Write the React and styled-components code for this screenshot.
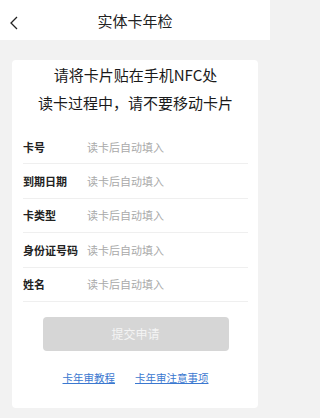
import React from "react";
import styled, { createGlobalStyle } from "styled-components";

const GlobalStyle = createGlobalStyle`
  html, body {
    margin: 0;
    padding: 0;
    background: #f2f2f2;
    font-family: "Noto Sans CJK SC", "Noto Sans", sans-serif;
  }
`;

const Page = styled.div`
  width: 270px;
  min-height: 418px;
  background: #f2f2f2;
`;
const Header = styled.div`
  position: relative;
  height: 40px;
  background: #fff;
  display: flex;
  align-items: center;
  justify-content: center;
  font-size: 15px;
  color: #222;
`;
const Back = styled.div`
  position: absolute;
  left: 8px;
  top: 13px;
  width: 12px;
  height: 14px;
`;
const Body = styled.div`
  padding: 20px 12px 10px;
`;
const Card = styled.div`
  background: #fff;
  border-radius: 4px;
  padding: 1px 10px 23px 11px;
`;
const Tip = styled.div`
  text-align: center;
  font-size: 15px;
  line-height: 28px;
  color: #1a1a1a;
  margin-bottom: 13px;
`;
const Row = styled.div`
  display: flex;
  align-items: center;
  height: 34.4px;
  box-sizing: border-box;
  border-bottom: 1px solid #efefef;
`;
const Label = styled.div`
  width: 64px;
  font-size: 11px;
  font-weight: 700;
  color: #222;
  white-space: nowrap;
`;
const Value = styled.div`
  font-size: 11px;
  color: #a9a9a9;
`;
const Submit = styled.button`
  display: block;
  width: 186px;
  height: 34px;
  margin: 15px auto 0;
  border: none;
  border-radius: 4px;
  background: #d6d6d6;
  color: #f4f4f4;
  font-family: inherit;
  font-size: 12px;
`;
const Links = styled.div`
  display: flex;
  justify-content: center;
  gap: 20px;
  margin-top: 20px;
  line-height: 14px;
`;
const Link = styled.a`
  font-size: 10.5px;
  color: #3b78d0;
  text-decoration: underline;
`;

const fields = ["卡号", "到期日期", "卡类型", "身份证号码", "姓名"];

export default function App() {
  return (
    <Page>
      <GlobalStyle />
      <Header>
        <Back>
          <svg width="12" height="14" viewBox="0 0 12 14">
            <polyline points="9,1 3,7 9,13" fill="none" stroke="#222" strokeWidth="1.3" />
          </svg>
        </Back>
        实体卡年检
      </Header>
      <Body>
        <Card>
          <Tip>
            请将卡片贴在手机NFC处
            <br />
            读卡过程中，请不要移动卡片
          </Tip>
          {fields.map((f) => (
            <Row key={f}>
              <Label>{f}</Label>
              <Value>读卡后自动填入</Value>
            </Row>
          ))}
          <Submit>提交申请</Submit>
          <Links>
            <Link>卡年审教程</Link>
            <Link>卡年审注意事项</Link>
          </Links>
        </Card>
      </Body>
    </Page>
  );
}
